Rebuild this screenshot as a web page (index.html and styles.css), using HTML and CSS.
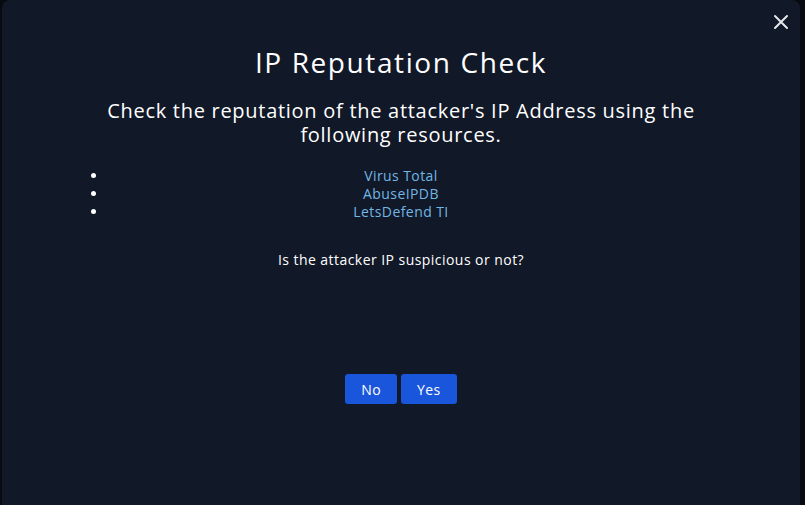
FILE: index.html
```html
<!DOCTYPE html>
<html lang="en">
<head>
<meta charset="utf-8">
<title>IP Reputation Check</title>
<link rel="stylesheet" href="styles.css">
</head>
<body>
<div class="modal">
  <button class="close" aria-label="Close">
    <svg width="16" height="16" viewBox="0 0 16 16"><path d="M2 2 L14 14 M14 2 L2 14" stroke="#e5e7eb" stroke-width="2" stroke-linecap="round"/></svg>
  </button>
  <div class="content">
    <h1 class="title">IP Reputation Check</h1>
    <p class="lead">Check the reputation of the attacker's IP Address using the following resources.</p>
    <ul class="links">
      <li><a href="#">Virus Total</a></li>
      <li><a href="#">AbuseIPDB</a></li>
      <li><a href="#">LetsDefend TI</a></li>
    </ul>
    <p class="question">Is the attacker IP suspicious or not?</p>
    <div class="actions">
      <button class="btn">No</button>
      <button class="btn">Yes</button>
    </div>
  </div>
</div>
</body>
</html>
```

FILE: styles.css
```css
html, body {
  margin: 0;
  padding: 0;
  height: 100%;
  background: #070a10;
  overflow: hidden;
}
body {
  font-family: "Open Sans", "DejaVu Sans", sans-serif;
  color: #ffffff;
  padding-left: 2px;
  padding-right: 5px;
}
.modal {
  position: relative;
  background: #111827;
  height: 505px;
  border-radius: 8px 8px 0 0;
}
.close {
  position: absolute;
  top: 13px;
  right: 10px;
  width: 18px;
  height: 18px;
  padding: 0;
  border: 0;
  background: transparent;
  display: flex;
  align-items: center;
  justify-content: center;
}
.content {
  padding: 42px 66px 0 66px;
  text-align: center;
}
.title {
  margin: 0;
  font-size: 28px;
  font-weight: 400;
  line-height: 40px;
  letter-spacing: 1.6px;
}
.lead {
  margin: 17px auto 0;
  font-size: 20px;
  line-height: 24px;
  max-width: 600px;
  letter-spacing: 0.72px;
}
.links {
  margin: 20px 0 0;
  padding: 0 40px;
  font-size: 14px;
  line-height: 18px;
  letter-spacing: 0.42px;
}
.links a {
  color: #72b6e6;
  text-decoration: none;
}
.question {
  margin: 29px 0 0;
  font-size: 14px;
  line-height: 20px;
  letter-spacing: 0.45px;
}
.actions {
  margin-top: 104px;
  display: flex;
  justify-content: center;
  gap: 4px;
}
.btn {
  font-family: inherit;
  font-size: 14px;
  letter-spacing: 0.4px;
  color: #ffffff;
  background: #1a56db;
  border: 0;
  border-radius: 3px;
  height: 30px;
  padding: 0 16px;
}
```
